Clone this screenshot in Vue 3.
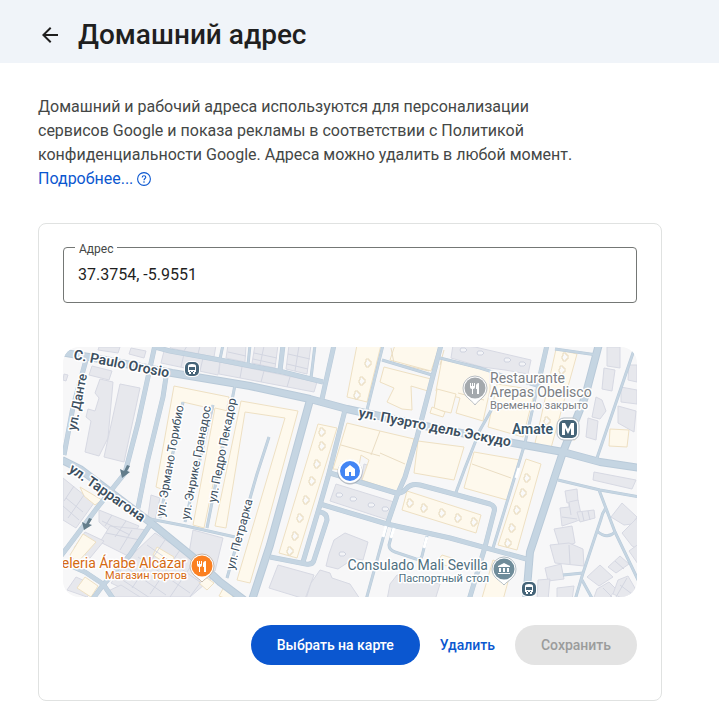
<script setup>
import { ref } from 'vue'

const address = ref('37.3754, -5.9551')

const majorRoads = [
  'M60 352 L100 359 L172 373 L250 386 L310 399 L347 409 L430 427 L513 443 L563 452 L600 462 L640 468',
  'M310 400 L288 480 L270 545 L252 600',
  'M599 344 L585 397 L563 452 L558 467 L530 552 L526 600',
  'M62 460 L80 469 L150 522 L193 557 L220 582 L244 600'
]
const roads = [
  'M155 345 L148 377 L138 423 L125 473 L97 508 L67 548 L60 557',
  'M166 377 L163 397 L147 463 L138 508',
  'M155 347 L170 351 L220 360 L283 372 L323 382',
  'M334 345 L322 399',
  'M86 360 L73 407 L64 455',
  'M150 525 L130 555 L103 585 L92 600',
  'M60 561 L85 572 L103 584 L114 600',
  'M283 345 L280 371',
  'M441 345 L434 372 L417 437 L405 477 L398 493 L387 525',
  'M330 473 L396 493 Q402 494 406 489 Q411 483 420 485 L450 493 L490 504 Q496 506 494 512 L485 547 L469 600',
  'M320 504 L387 524 L450 538 L530 560',
  'M345 410 L328 477 L320 505 L303 562',
  'M270 557 L306 564 Q313 565 314 560 L327 520 Q327 513 320 512',
  'M547 345 L538 385'
]
const lanes = [
  'M223 345 L220 359', 'M250 345 L248 365', 'M315 345 L311 378',
  'M383 345 L367 410', 'M382 360 L432 375', 'M235 385 L207 528',
  'M183 402 L160 518', 'M213 405 L185 522', 'M150 519 L186 526 L235 537',
  'M269 437 L257 474 L227 578', 'M387 524 L366 600',
  'M538 385 L525 443 L493 548', 'M555 349 L597 355', 'M634 350 L597 458',
  'M493 407 L480 430 L465 468 L455 495',
  'M558 480 L600 490 L640 497', 'M599 490 L615 532 L640 584',
  'M606 508 Q602 513 601 519 L583 573 L575 600', 'M597 531 Q607 540 615 532',
  'M583 573 L563 575', 'M582 580 L593 600', 'M394 526 L389 545 Q389 550 395 552 L416 559 Q421 560 422 556 L427 536',
  'M440 358 L480 368 L540 387'
]
const grey = [
  '92,366 112,371 109,380 89,375', '100,379 113,382 108,438 99,456 85,452 91,421 86,417 88,409 95,411 99,398 95,393',
  '120,384 140,388 124,462 104,457', '64,374 68,375 66,381 63,380',
  '99,347 120,347 118,353 98,350', '131,348 146,351 144,358 129,354',
  '164,351 220,361 218,375 161,363', '220,362 317,382 314,392 219,374',
  '172,345 216,345 214,357 170,348', '228,345 246,345 245,362 226,358',
  '255,345 278,345 275,368 252,363', '289,345 311,345 307,374 286,369',
  '99,510 139,526 125,545 99,522', '110,526 148,530 128,556 100,542',
  '63,478 94,503 76,528 63,520', '85,532 104,541 90,558 74,548',
  '155,533 187,554 200,562 212,578 190,597 140,597 111,583 135,552',
  '193,530 223,538 215,571 189,553', '151,495 160,498 155,520 148,516',
  '76,577 96,586 87,597 67,590', '108,591 121,585 140,597 112,597',
  '453,345 475,347 531,360 528,374 505,370 482,367 451,358',
  '374,467 369,483 361,481 364,464', '336,484 394,502 388,520 330,501',
  '345,533 368,542 363,560 351,558 347,563 338,569 326,566 329,554 334,540',
  '278,565 314,575 305,599 269,588', '320,570 330,573 332,578 350,584 360,599 306,599 311,583',
  '397,575 440,584 435,600 387,600 390,584',
  '607,347 620,347 620,368 607,366', '604,368 615,370 612,391 602,389',
  '596,397 602,400 606,411 600,419 592,417', '588,418 598,421 596,440 586,437',
  '621,387 637,390 637,404 621,402', '618,406 636,411 634,432 618,423', '629,365 637,365 637,382 628,380',
  '594,472 636,480 632,489 593,480', '565,491 577,489 578,501 567,503',
  '569,502 578,500 582,519 574,522 562,526 561,517 560,508 569,507', '577,512 594,510 595,518 580,522',
  '554,529 572,526 575,543 560,548', '550,545 569,543 583,549 584,566 555,563',
  '545,568 561,564 564,579 548,581', '538,580 550,579 548,600 537,600', '557,588 574,586 572,600 557,600',
  '611,517 622,503 637,517 632,524 624,525', '622,533 637,518 640,550 632,546', '629,551 640,543 640,567',
  '587,577 600,565 613,577 599,586', '608,567 620,556 629,564 616,573',
  '597,589 609,582 616,589 608,600 593,600', '618,580 628,576 636,590 624,599 613,594'
]
const cream = [
  '174,386 229,397 226,412 183,402 164,490 156,487', '215,408 228,411 204,528 193,525',
  '241,401 298,411 267,525 250,583 237,580 285,418 245,412 226,528 215,526',
  '357,345 381,345 367,402 347,397', '318,424 337,428 297,558 279,553',
  '395,345 440,345 431,371 390,360', '384,367 431,379 428,391 411,386 412,410 402,409 387,402 394,388 380,382',
  '347,423 380,431 414,439 405,474 397,492 362,480 369,460 361,455 358,471 333,469',
  '442,359 490,371 490,390 483,421 456,413 460,398 436,391', '437,389 456,394 451,413 434,409',
  '432,407 445,412 443,417 430,413', '418,441 464,447 454,480 414,473',
  '474,452 520,460 507,500 464,488', '407,491 481,515 476,533 402,510',
  '497,384 535,390 523,437 488,427',
  '556,349 577,354 551,448 535,443 540,422',
  '526,459 541,464 517,550 498,545', '570,429 576,430 575,440 570,439',
  '610,429 629,430 627,447 609,446', '442,555 455,559 451,567 436,563',
  '493,560 512,567 503,600 482,598',
  '80,487 102,500 95,505 84,496', '83,534 96,542 77,563 70,555',
  '157,547 174,557 170,566 153,555', '204,576 214,583 207,590 199,583', '85,577 98,586 91,597 77,588', '224,587 234,595 230,600 219,596'
]
const seams = [
  'M184 354 L181 367', 'M203 358 L200 371', 'M242 367 L240 378', 'M264 371 L261 382', 'M290 377 L287 387',
  'M187 346 L184 351', 'M200 346 L198 354', 'M228 352 L246 356', 'M254 353 L277 358', 'M253 359 L276 364', 'M264 346 L260 365', 'M288 354 L310 359', 'M287 364 L308 369', 'M299 346 L295 371',
  'M66 498 L83 512', 'M63 506 L79 520', 'M74 486 L64 501', 'M84 495 L68 518', 'M112 515 L105 526', 'M126 521 L115 537', 'M106 533 L140 540', 'M132 530 L120 550', 'M102 521 L130 535',
  'M147 545 L200 582', 'M138 557 L190 593', 'M127 568 L166 595', 'M118 577 L150 598', 'M165 540 L132 588', 'M180 550 L150 594', 'M193 563 L170 597', 'M207 574 L189 598',
  'M569 503 L571 515', 'M582 512 L584 521', 'M588 511 L590 520', 'M562 517 L577 519', 'M569 545 L570 564', 'M603 588 L612 597', 'M620 585 L632 594', 'M615 561 L624 569', 'M627 578 L616 597'
]
const creamSeams = [
  'M341 445 L380 456', 'M380 431 L371 455', 'M380 453 L405 464', 'M472 464 L511 478', 'M391 348 L394 363 L429 371', 'M444 350 L440 365', 'M458 393 L484 400'
]
const yards = [
  [368, 362], [362, 380], [357, 394], [322, 431], [322, 445], [317, 463], [312, 480], [306, 499], [300, 517], [295, 535], [290, 550],
  [410, 502], [424, 507], [442, 512], [458, 517], [474, 521], [527, 477], [523, 492], [517, 509], [512, 527], [508, 542], [565, 356], [562, 369], [547, 420]
]
const greyYards = [[463, 350], [480, 353], [507, 360], [522, 364], [339, 495], [353, 499], [371, 505], [385, 509], [342, 554]]
const labels = [
  { text: 'C. Paulo Orosio', x: 73, y: 359, angle: 11, kind: 'main' },
  { text: 'ул. Данте', x: 76, y: 431, angle: -79, kind: 'side' },
  { text: 'ул. Таррагона', x: 68, y: 471, angle: 35, kind: 'main' },
  { text: 'ул. Эрмано Торибио', x: 164, y: 517, angle: -80, kind: 'lane' },
  { text: 'ул. Энрике Гранадос', x: 189, y: 520, angle: -79, kind: 'lane' },
  { text: 'ул. Педро Пекадор', x: 216, y: 503, angle: -79, kind: 'lane' },
  { text: 'ул. Петрарка', x: 234, y: 570, angle: -75, kind: 'lane' },
  { text: 'ул. Пуэрто дель Эскудо', x: 358, y: 417, angle: 11, kind: 'main' }
]
</script>

<template>
  <div class="page">
    <header class="top">
      <button class="back" type="button" aria-label="Назад">
        <svg viewBox="0 0 24 24" width="24" height="24" aria-hidden="true">
          <path d="M20 11H7.8l5.6-5.6L12 4l-8 8 8 8 1.4-1.4L7.8 13H20z" fill="#1f1f1f" />
        </svg>
      </button>
      <h1>Домашний адрес</h1>
    </header>

    <main>
      <p class="intro">
        Домашний и рабочий адреса используются для персонализации сервисов Google и показа рекламы в соответствии с Политикой конфиденциальности Google. Адреса можно удалить в любой момент.
        <a href="#">Подробнее...<svg class="help" viewBox="0 0 16 16" width="16" height="16" aria-hidden="true">
          <circle cx="8" cy="8" r="6.4" fill="none" stroke="currentColor" stroke-width="1.1" />
          <path d="M6.2 6.5C6.2 5.3 7 4.7 8 4.7s1.8.7 1.8 1.6C9.8 7.5 8 7.6 8 9.2" fill="none" stroke="currentColor" stroke-width="1.1" />
          <circle cx="8" cy="11" r=".8" fill="currentColor" />
        </svg></a>
      </p>

      <form class="card" @submit.prevent>
        <div class="field">
          <label for="address">Адрес</label>
          <input id="address" v-model="address" type="text">
        </div>

        <svg class="map" viewBox="63 347 574 250" role="img" aria-label="Карта">
          <rect x="63" y="347" width="574" height="250" fill="#f7f7f8" />
          <g fill="#e7e8ed" stroke="#d7d9e3" stroke-width="1">
            <polygon v-for="p in grey" :key="p" :points="p" />
          </g>
          <g fill="#fef9ed" stroke="#eee0c3" stroke-width="1">
            <polygon v-for="p in cream" :key="p" :points="p" />
          </g>
          <g fill="none" stroke="#d3d6e1" stroke-width="1">
            <path v-for="d in seams" :key="d" :d="d" />
          </g>
          <g fill="none" stroke="#eaddc3" stroke-width="1">
            <path v-for="d in creamSeams" :key="d" :d="d" />
          </g>
          <g fill="#fafafa" stroke="#e8dabc" stroke-width="1">
            <path v-for="([x, y], i) in yards" :key="i" :d="`M${x - 2} ${y - 3}h3v2h2v4h-2v2h-3v-2h-1v-3h1z`" />
          </g>
          <g fill="#f3f4f7" stroke="#cfd3df" stroke-width="1">
            <path v-for="([x, y], i) in greyYards" :key="i" :d="`M${x - 2} ${y - 2}h4l2 2-2 2h-4l-1-2z`" />
          </g>
          <g fill="none" stroke="#b9cad9" stroke-linejoin="round">
            <path v-for="d in lanes" :key="d" :d="d" stroke-width="3" />
            <path v-for="d in roads" :key="d" :d="d" stroke-width="5" />
            <path v-for="d in majorRoads" :key="d" :d="d" stroke-width="8" />
          </g>
          <g fill="none" stroke="#c5d5e2" stroke-linejoin="round">
            <path v-for="d in lanes" :key="d" :d="d" stroke-width="2" />
            <path v-for="d in roads" :key="d" :d="d" stroke-width="4" />
            <path v-for="d in majorRoads" :key="d" :d="d" stroke-width="6" />
          </g>
          <g stroke="#fff" stroke-width="3">
            <path d="M386 526l-3 11M394 528l-3 10M427 537l-3 11M519 468l-3 10" />
          </g>
          <g fill="#637d8b">
            <path d="M127 465l-3 6-4-2 2 9 8-6-3-1 3-5z" />
            <path d="M89 518l-3 6-4-2 2 8 8-5-3-1 3-5z" />
          </g>

          <text
            v-for="l in labels"
            :key="l.text"
            :class="['street', l.kind]"
            :transform="`translate(${l.x} ${l.y}) rotate(${l.angle})`"
          >{{ l.text }}</text>

          <g v-for="([x, y], i) in [[192, 369], [529, 589]]" :key="'bus' + i" :transform="`translate(${x} ${y})`">
            <rect x="-8" y="-8" width="16" height="16" rx="6" fill="#fff" />
            <rect x="-7" y="-7" width="14" height="14" rx="5" fill="#456478" />
            <path d="M-4-3q0-2 4-2t4 2v6h-1v2h-2v-2h-2v2h-2v-2h-1z" fill="#fff" />
            <path d="M-3-2h6v3h-6zM-2 2h1v1h-1zM1 2h1v1h-1z" fill="#456478" />
          </g>

          <g transform="translate(475 388)">
            <path d="M0 17C-3 12-12 9-12 0A12 12 0 0 1 12 0C12 9 3 12 0 17z" fill="#fff" stroke="#b9bec3" />
            <circle r="10.500" fill="#a4a9ad" />
            <path d="M-5-5v4q0 2 2 2v5h1v-5q2 0 2-2v-4h-1v3h-1v-3h-1v3h-1v-3zM2 6v-5h-1v-3q0-3 3-3v11z" fill="#fff" />
          </g>
          <g class="poi muted">
            <text x="490" y="383">Restaurante</text>
            <text x="490" y="397">Arepas Obelisco</text>
            <text class="small" x="490" y="409">Временно закрыто</text>
          </g>

          <text class="station" x="553" y="434" text-anchor="end">Amate</text>
          <rect x="557" y="418" width="22" height="22" rx="7" fill="#fff" stroke="#b4bcc4" />
          <rect x="559" y="420" width="18" height="18" rx="5" fill="#456478" />
          <path d="M562 435v-12h3l3 6 3-6h3v12h-3v-7l-3 6-3-6v7z" fill="#fff" />

          <g transform="translate(350 471)">
            <circle cy="1" r="12.500" fill="#8c96a4" opacity=".6" />
            <circle r="12" fill="#fff" />
            <circle r="10" fill="#4285f4" />
            <path d="M0-6l-5 4v7h4V1h2v4h4v-7z" fill="#fff" />
          </g>

          <g transform="translate(202 566)">
            <path d="M0 16C-3 12-12 9-12 0A12 12 0 0 1 12 0C12 9 3 12 0 16z" fill="#fff" stroke="#c4b8ad" />
            <circle r="10.500" fill="#fb8021" />
            <path d="M-5-5v4q0 2 2 2v5h1v-5q2 0 2-2v-4h-1v3h-1v-3h-1v3h-1v-3zM2 6v-5h-1v-3q0-3 3-3v11z" fill="#fff" />
          </g>
          <g class="poi food" text-anchor="end">
            <text x="186" y="568">eleria Árabe Alcázar</text>
            <text class="small" x="187" y="579">Магазин тортов</text>
          </g>

          <g transform="translate(504 569)">
            <path d="M0 16C-3 12-12 9-12 0A12 12 0 0 1 12 0C12 9 3 12 0 16z" fill="#fff" stroke="#b4bfc6" />
            <circle r="10.500" fill="#6f8c9a" />
            <path d="M0-6l-6 3v1H6v-1zM-5-1h2v4h-2zM-1-1h2v4h-2zM3-1h2v4h-2zM-6 4H6v1H-6z" fill="#fff" />
          </g>
          <g class="poi civic" text-anchor="end">
            <text x="488" y="570">Consulado Mali Sevilla</text>
            <text class="small" x="489" y="582">Паспортный стол</text>
          </g>
        </svg>

        <div class="actions">
          <button class="primary" type="button">Выбрать на карте</button>
          <button class="plain" type="button">Удалить</button>
          <button class="save" type="submit" disabled>Сохранить</button>
        </div>
      </form>
    </main>
  </div>
</template>

<style>
body {
  margin: 0;
  background: #fff;
}
</style>

<style scoped>
.page {
  font-family: Roboto, "Noto Sans", sans-serif;
  color: #1f1f1f;
}

.top {
  display: flex;
  align-items: center;
  gap: 16px;
  padding: 15px 38px 8px;
  background: #f0f4f9;
}

.back {
  display: flex;
  padding: 0;
  border: 0;
  background: none;
  cursor: pointer;
}

h1 {
  margin: 0;
  font-size: 28px;
  line-height: 40px;
  font-weight: 500;
}

main {
  padding: 32px 57px 19px 38px;
}

.intro {
  max-width: 560px;
  margin: 0 0 32px;
  font-size: 16px;
  line-height: 24px;
  color: #444746;
}

.intro a {
  color: #0b57d0;
  text-decoration: none;
}

.help {
  margin-left: 3px;
  vertical-align: -3px;
}

.card {
  padding: 23px 24px 35px;
  border: 1px solid #e0e2e1;
  border-radius: 8px;
}

.field {
  position: relative;
  margin-bottom: 44px;
}

.field label {
  position: absolute;
  top: -6px;
  left: 12px;
  padding: 0 4px;
  background: #fff;
  color: #444746;
  font-size: 12px;
  line-height: 16px;
}

.field input {
  display: block;
  box-sizing: border-box;
  width: 100%;
  height: 56px;
  padding: 0 14px 2px;
  border: 1px solid #747775;
  border-radius: 4px;
  background: none;
  color: #1f1f1f;
  font: inherit;
  font-size: 16px;
}

.map {
  display: block;
  width: 100%;
  border-radius: 16px;
}

.map text {
  font-family: Roboto, sans-serif;
  stroke: #fff;
  stroke-width: 3px;
  stroke-linejoin: round;
  paint-order: stroke;
}

.street {
  fill: #3c4f60;
  font-size: 12px;
}

.main {
  font-size: 14px;
  font-weight: 600;
}

.side {
  font-size: 13px;
  font-weight: 500;
}

.station {
  fill: #38566a;
  font-size: 14px;
  font-weight: 600;
}

.poi {
  font-size: 14px;
}

.poi .small {
  font-size: 11px;
}

.muted {
  fill: #7c8084;
}

.food {
  fill: #d56a13;
}

.civic {
  fill: #50707f;
}

.actions {
  display: flex;
  justify-content: flex-end;
  align-items: center;
  margin-top: 28px;
}

.actions button {
  height: 40px;
  padding: 0 26px;
  border: 0;
  border-radius: 20px;
  font: inherit;
  font-size: 14px;
  font-weight: 500;
}

.actions .primary {
  background: #0b57d0;
  color: #fff;
}

.actions .plain {
  padding: 0 20px;
  background: none;
  color: #0b57d0;
}

.actions .save {
  background: #e3e3e3;
  color: #9b9c9c;
}
</style>
